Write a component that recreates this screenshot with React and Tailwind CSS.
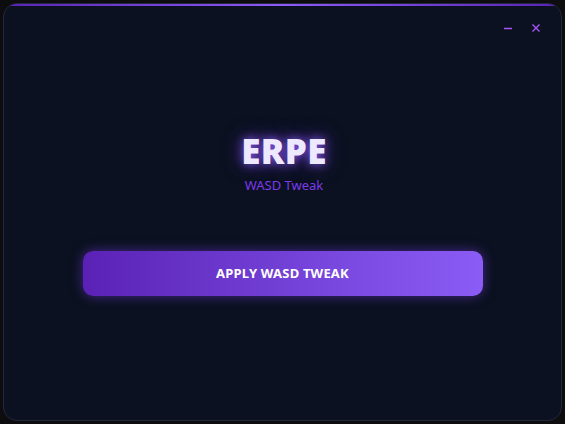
import React from "react";

export default function App() {
  return (
    <div className="w-[565px] h-[424px] bg-[#0d0d0f] p-[3px]" style={{ fontFamily: '"Noto Sans", "Open Sans", sans-serif' }}>
      <div className="relative w-full h-full rounded-[14px] bg-[#0b1120] border border-[#23283a] flex flex-col overflow-hidden">
        <div className="absolute top-0 left-0 right-0 h-[2px] bg-gradient-to-r from-[#5b21b6] via-[#8b5cf6] to-[#5b21b6]"></div>
        <div className="flex justify-end items-center gap-[14px] pr-[18px] pt-[16px] h-[32px]">
          <button className="w-[14px] h-[14px] flex items-center justify-center text-[#a855f7]">
            <svg width="10" height="10" viewBox="0 0 10 10"><path d="M1 5.5h8" stroke="currentColor" strokeWidth="1.4" /></svg>
          </button>
          <button className="w-[14px] h-[14px] flex items-center justify-center text-[#a855f7]">
            <svg width="10" height="10" viewBox="0 0 10 10"><path d="M1.5 1.5l7 7M8.5 1.5l-7 7" stroke="currentColor" strokeWidth="1.4" /></svg>
          </button>
        </div>
        <div className="flex flex-col items-center mt-[95px] pl-[3px]">
          <h1 className="text-[35px] leading-[40px] font-black text-[#ede9fe] tracking-[0.3px]" style={{ textShadow: "0 0 10px rgba(139,92,246,0.9), 0 0 20px rgba(124,58,237,0.6)" }}>ERPE</h1>
          <p className="text-[13px] leading-[18px] mt-[5px] text-[#7c3aed]">WASD Tweak</p>
        </div>
        <div className="flex justify-center mt-[57px]">
          <button className="w-[400px] h-[45px] rounded-[10px] bg-gradient-to-r from-[#5b21b6] to-[#8b5cf6] text-white text-[13px] font-bold tracking-[0.2px] shadow-[0_0_12px_rgba(124,58,237,0.55)]">
            APPLY WASD TWEAK
          </button>
        </div>
      </div>
    </div>
  );
}
